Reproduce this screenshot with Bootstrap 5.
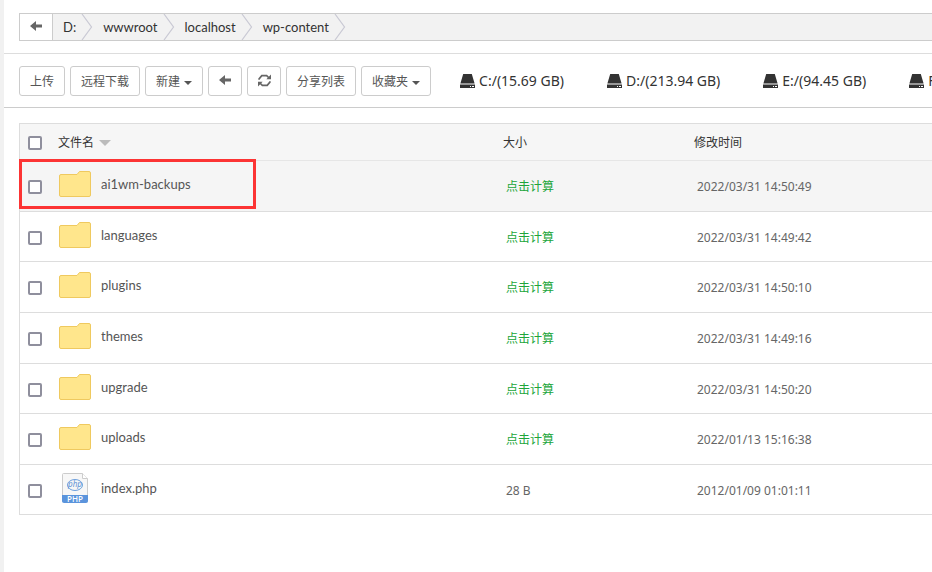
<!DOCTYPE html>
<html lang="zh-CN">
<head>
<meta charset="utf-8">
<meta name="viewport" content="width=device-width, initial-scale=1">
<title>文件管理</title>
<link href="https://cdn.jsdelivr.net/npm/bootstrap@5.3.0/dist/css/bootstrap.min.css" rel="stylesheet">
<style>
body { font: 12px/18px "Noto Sans", "Noto Sans CJK SC", sans-serif; color: #333; background: #fff; overflow-x: hidden; }
.file-manager { border-left: 4px solid #f1f1f1; }
.path-area { padding: 13px 0 12px 15px; border-bottom: 1px solid #ddd; }
.path-bar { height: 28px; border: 1px solid #ccc; border-right: 0; background: #f2f2f2; font-family: Lato, "Noto Sans CJK SC", sans-serif; font-size: 13px; }
.path-back { width: 33px; border: 0; border-right: 1px solid #ccc; background: #fff; color: #666; padding: 0 0 2px; }
.crumb { color: #333; padding-left: 10px; text-decoration: none; }
.crumb svg { margin-left: 5px; }
.tool-area { padding: 12px 0 11px 15px; border-bottom: 1px solid #ccc; gap: 5px; }
.tool { height: 30px; padding: 2px 10px 0; border: 1px solid #ccc; border-radius: 3px; font-size: 12px; line-height: 18px; color: #555; background: #fff; white-space: nowrap; flex: none; }
.tool.dropdown-toggle::after { margin-left: 4px; border-top-width: 4px; border-left-width: 4px; border-right-width: 4px; vertical-align: 1px; }
.tool.tool-icon { display: flex; align-items: center; justify-content: center; width: 34px; padding: 0 0 2px; color: #666; }
.drives { gap: 43px; margin-left: 24px; font-size: 14px; }
.drive { color: #333; text-decoration: none; white-space: nowrap; gap: 4px; }
.list-area { padding: 15px 0 0 15px; }
.files { width: 100%; table-layout: fixed; border-collapse: separate; border-spacing: 0; border: 1px solid #ddd; border-right: 0; }
.files th { height: 36px; padding: 2px 0 0; font-weight: 400; background: #f6f6f6; }
.files td { height: 51px; padding: 2px 0 0 3px; border-top: 1px solid #ddd; color: #666; }
.files tr:nth-child(3n+2) td, .files tr:last-child td { height: 50px; }
.files tr.is-hover td { background: #f5f5f5; border-top-color: #e6e6e6; }
.files .pick { width: 38px; padding: 2px 0 0 8px; position: relative; }
.col-name { width: 445px; }
.col-size { width: 191px; }
.files td.name { padding: 0 0 4px; }
.name a { color: #555; text-decoration: none; font-family: Lato, "Noto Sans CJK SC", sans-serif; font-size: 13px; gap: 9px; }
.pick input { appearance: none; display: block; width: 14px; height: 14px; margin: 0; border: 2px solid #8f8f9d; border-radius: 2px; background: #fff; }
.pick input:checked { background: #8f8f9d; }
.sort-mark { border: 6px solid transparent; border-top-color: #bbb; border-bottom: 0; margin-left: 5px; }
.calc { color: #20a53a; text-decoration: none; }
.callout-box { position: absolute; left: -1px; top: -2px; width: 237px; height: 50px; border: 3px solid #fc3434; pointer-events: none; z-index: 2; }
.php-word { font: 600 8px "Open Sans", sans-serif; }
.php-logo { font: italic 8px "Noto Sans", sans-serif; }
</style>
<script src="https://cdn.jsdelivr.net/npm/bootstrap@5.3.0/dist/js/bootstrap.bundle.min.js"></script>
</head>
<body>
<svg class="d-none" aria-hidden="true">
  <symbol id="i-back" viewBox="0 0 12 10"><path fill="currentColor" d="M0 5 6 0V3.500H12V6.500H6V10Z"/></symbol>
  <symbol id="i-refresh" viewBox="0 0 12 12"><g fill="none" stroke="currentColor" stroke-width="1.500"><path d="M1 5.300V4.500L3.500 1.500H8L10 3.500M11 6.700V7.500L8.500 10.500H4L2 8.500"/></g><path fill="currentColor" d="M12 .5V4.800H7.700ZM0 11.500V7.200H4.300Z"/></symbol>
  <symbol id="i-disk" viewBox="0 0 15 14"><path fill="currentColor" d="M3.200 0H11.800L14.600 9.500H.4ZM0 10.500H15V14H0Z"/><path fill="#fff" d="M10 12h1v1h-1zM12 12h2v1h-2z"/></symbol>
  <symbol id="i-sep" viewBox="0 0 12 26"><path fill="none" stroke="#c9c9d4" stroke-width="1.200" d="M1 0 10.500 13 1 26"/></symbol>
  <symbol id="i-folder" viewBox="0 0 32 26"><path fill="#ffe68c" stroke="#efc95f" d="M2 3.500H18L20.500.500H30Q31.500.500 31.500 2V24Q31.500 25.500 30 25.500H2Q.500 25.500.500 24V5Q.500 3.500 2 3.500Z"/></symbol>
</svg>
<main class="file-manager min-vh-100">
  <div class="path-area">
    <nav class="path-bar d-flex align-items-stretch" aria-label="路径">
      <button type="button" class="path-back d-flex align-items-center justify-content-center" aria-label="后退"><svg width="12" height="10"><use href="#i-back"/></svg></button>
      <a class="crumb d-flex align-items-center" href="#">D:<svg width="12" height="26"><use href="#i-sep"/></svg></a>
      <a class="crumb d-flex align-items-center" href="#">wwwroot<svg width="12" height="26"><use href="#i-sep"/></svg></a>
      <a class="crumb d-flex align-items-center" href="#">localhost<svg width="12" height="26"><use href="#i-sep"/></svg></a>
      <a class="crumb d-flex align-items-center" href="#">wp-content<svg width="12" height="26"><use href="#i-sep"/></svg></a>
    </nav>
  </div>
  <div class="tool-area d-flex align-items-center overflow-hidden">
    <button type="button" class="tool">上传</button>
    <button type="button" class="tool">远程下载</button>
    <button type="button" class="tool dropdown-toggle">新建</button>
    <button type="button" class="tool tool-icon" aria-label="后退"><svg width="12" height="10"><use href="#i-back"/></svg></button>
    <button type="button" class="tool tool-icon" aria-label="刷新"><svg width="13" height="13"><use href="#i-refresh"/></svg></button>
    <button type="button" class="tool">分享列表</button>
    <button type="button" class="tool dropdown-toggle">收藏夹</button>
    <div class="drives d-flex">
      <a class="drive d-flex align-items-center" href="#"><svg width="15" height="14"><use href="#i-disk"/></svg>C:/(15.69 GB)</a>
      <a class="drive d-flex align-items-center" href="#"><svg width="15" height="14"><use href="#i-disk"/></svg>D:/(213.94 GB)</a>
      <a class="drive d-flex align-items-center" href="#"><svg width="15" height="14"><use href="#i-disk"/></svg>E:/(94.45 GB)</a>
      <a class="drive d-flex align-items-center" href="#"><svg width="15" height="14"><use href="#i-disk"/></svg>F:/</a>
    </div>
  </div>
  <div class="list-area">
    <table class="files">
      <thead>
        <tr>
          <th class="pick"><input type="checkbox" aria-label="全选"></th>
          <th class="col-name"><span class="d-flex align-items-center">文件名<span class="sort-mark"></span></span></th>
          <th class="col-size">大小</th>
          <th>修改时间</th>
        </tr>
      </thead>
      <tbody>
        <tr class="is-hover">
          <td class="pick"><input type="checkbox" aria-label="ai1wm-backups"><span class="callout-box"></span></td>
          <td class="name"><a class="d-flex align-items-center" href="#"><svg width="34" height="26"><use href="#i-folder"/></svg>ai1wm-backups</a></td>
          <td><a class="calc" href="#">点击计算</a></td><td>2022/03/31 14:50:49</td>
        </tr>
        <tr>
          <td class="pick"><input type="checkbox" aria-label="languages"></td>
          <td class="name"><a class="d-flex align-items-center" href="#"><svg width="34" height="26"><use href="#i-folder"/></svg>languages</a></td>
          <td><a class="calc" href="#">点击计算</a></td><td>2022/03/31 14:49:42</td>
        </tr>
        <tr>
          <td class="pick"><input type="checkbox" aria-label="plugins"></td>
          <td class="name"><a class="d-flex align-items-center" href="#"><svg width="34" height="26"><use href="#i-folder"/></svg>plugins</a></td>
          <td><a class="calc" href="#">点击计算</a></td><td>2022/03/31 14:50:10</td>
        </tr>
        <tr>
          <td class="pick"><input type="checkbox" aria-label="themes"></td>
          <td class="name"><a class="d-flex align-items-center" href="#"><svg width="34" height="26"><use href="#i-folder"/></svg>themes</a></td>
          <td><a class="calc" href="#">点击计算</a></td><td>2022/03/31 14:49:16</td>
        </tr>
        <tr>
          <td class="pick"><input type="checkbox" aria-label="upgrade"></td>
          <td class="name"><a class="d-flex align-items-center" href="#"><svg width="34" height="26"><use href="#i-folder"/></svg>upgrade</a></td>
          <td><a class="calc" href="#">点击计算</a></td><td>2022/03/31 14:50:20</td>
        </tr>
        <tr>
          <td class="pick"><input type="checkbox" aria-label="uploads"></td>
          <td class="name"><a class="d-flex align-items-center" href="#"><svg width="34" height="26"><use href="#i-folder"/></svg>uploads</a></td>
          <td><a class="calc" href="#">点击计算</a></td><td>2022/01/13 15:16:38</td>
        </tr>
        <tr>
          <td class="pick"><input type="checkbox" aria-label="index.php"></td>
          <td class="name"><a class="d-flex align-items-center" href="#"><svg width="34" height="30" viewBox="-4 0 34 30"><path fill="#f7f7f7" stroke="#ccc" d="M1.500.500H20.500L25.500 5.500V28.500H.500V1.500Q.500.500 1.500.500Z"/><path fill="#fff" stroke="#ccc" d="M20.500.500V5.500H25.500"/><ellipse cx="13" cy="12" rx="7.500" ry="5.500" fill="none" stroke="#6d9fdc"/><text class="php-logo" x="13" y="14" text-anchor="middle" fill="#5a90d4">php</text><path fill="#5b94dc" d="M0 22H26V28Q26 30 24 30H2Q0 30 0 28Z"/><text class="php-word" x="13" y="29" text-anchor="middle" fill="#fff">PHP</text></svg>index.php</a></td>
          <td>28 B</td><td>2012/01/09 01:01:11</td>
        </tr>
      </tbody>
    </table>
  </div>
</main>
</body>
</html>
